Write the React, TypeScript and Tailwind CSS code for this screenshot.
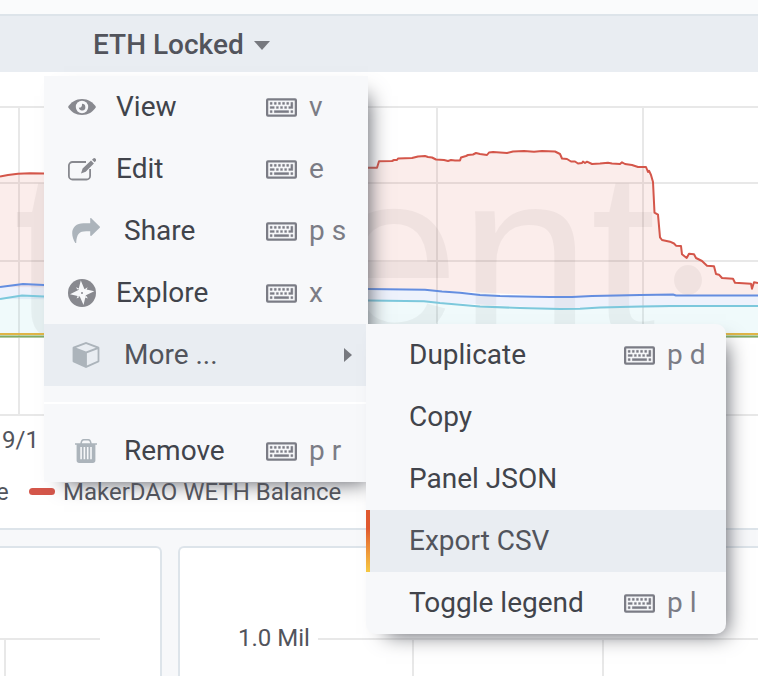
import React from "react";

const Keyboard = () => (
  <svg viewBox="0 0 15 9" className="h-[19px] w-[31px] shrink-0" aria-hidden="true">
    <rect x="0.55" y="0.55" width="13.9" height="7.9" rx="0.4" fill="none" stroke="#7b7c85" strokeWidth="1.1" />
    <path
      fill="#7b7c85"
      stroke="#7b7c85"
      strokeWidth="0.15"
      d="M2 2h1v1h-1zM4 2h1v1h-1zM6 2h1v1h-1zM8 2h1v1h-1zM10 2h1v1h-1zM12 2h1v3h-2v-1h1zM2 4h2v1h-2zM5 4h1v1h-1zM7 4h1v1h-1zM9 4h1v1h-1zM2 6h1v1h-1zM4 6h7v1h-7zM12 6h1v1h-1z"
    />
  </svg>
);

const EyeIcon = () => (
  <svg viewBox="0 0 28 28" className="size-7" aria-hidden="true">
    <path fill="#88898f" d="M0 14C3 9 8 6 14 6s11 3 14 8c-3 5-8 8-14 8S3 19 0 14z" />
    <circle cx="14" cy="14" r="6.2" fill="#f7f8fa" />
    <path fill="#88898f" d="M14 10.8a3.3 3.3 0 1 1-3.2 3.8c1.6.5 3.6-.8 3.2-3.8z" />
  </svg>
);

const EditIcon = () => (
  <svg viewBox="0 0 28 28" className="size-7" aria-hidden="true">
    <path
      fill="none"
      stroke="#88898f"
      strokeWidth="1.8"
      d="M18 7H4.5A3.6 3.6 0 0 0 .9 10.6v10.3a3.6 3.6 0 0 0 3.6 3.6h14a3.6 3.6 0 0 0 3.6-3.6V14"
    />
    <path fill="#88898f" d="M13 18.5l1.6-5L23 5.6l2.9 2.9-8.2 8.3zM24 4.7l1-1a1.7 1.7 0 0 1 2.6 2.6l-1 1z" />
  </svg>
);

const ShareIcon = () => (
  <svg viewBox="0 0 28 28" className="size-7" aria-hidden="true">
    <path
      fill="#acb4bb"
      d="M18.2 1.5c.3-.5.9-.5 1.3-.1l8.2 8.1c.4.4.4.9 0 1.3l-8.2 8c-.5.5-1.3.2-1.3-.5v-4.1h-4.1C7.5 14.2 4.5 17 4.2 26H3.3C1.5 23 .2 19.5.2 16.2c0-6 4.3-10 11.2-10h6.8z"
    />
  </svg>
);

const CompassIcon = () => (
  <svg viewBox="0 0 28 28" className="size-7" aria-hidden="true">
    <circle cx="14" cy="14" r="14" fill="#88898f" />
    <path
      fill="#f7f8fa"
      d="M12.800 1.500l3.600 8.500 9.900 2.300-8.400 4-2.400 9.700-3.700-8.500L2 15.200l8.400-4.200zM8 8.300l3 1.200-1.700 1zM19.600 8.300l-1.200 3-1.200-1.600zM8.600 19.600l1.200-3 1.300 1.700zM19.800 19.500l-3-1.200 1.700-1.200z"
    />
    <circle cx="14" cy="14" r="1" fill="#88898f" />
  </svg>
);

const CubeIcon = () => (
  <svg viewBox="0 0 28 28" className="size-7" aria-hidden="true">
    <path
      fill="#acb4bb"
      fillRule="evenodd"
      d="M14 1l12.800 4.800c.4.2.6.5.6.9v13.600c0 .4-.2.700-.6.900L14 27 1.200 21.200c-.4-.2-.6-.5-.6-.9V6.700c0-.4.2-.7.6-.9zM14 2.900L4.100 6.700 14 10.500l9.900-3.800zM14.900 12.200v12.400l10.700-4.800V8.200z"
    />
  </svg>
);

const TrashIcon = () => (
  <svg viewBox="0 0 28 28" className="size-7" aria-hidden="true">
    <path
      fill="#acb4bb"
      fillRule="evenodd"
      d="M3 6.200h5.300c.5-2.700 1.500-4.200 3.300-4.200h4.800c1.800 0 2.800 1.500 3.300 4.200H25v1.600h-1.600v15.700c0 1.500-1 2.500-2.500 2.500H7.100c-1.500 0-2.500-1-2.500-2.500V7.800H3zM9.900 6.200h8.200c-.3-1.700-.9-2.600-2-2.600h-4.200c-1.100 0-1.700.9-2 2.600zM8.300 10v12.200h1.600V10zM11.600 10v12.200h1.600V10zM14.900 10v12.200h1.600V10zM18.200 10v12.200h1.600V10z"
    />
  </svg>
);

type MenuItem = {
  label: string;
  icon: React.ReactNode;
  wide?: boolean;
  keys?: string;
  active?: boolean;
};

const mainItems: MenuItem[] = [
  { label: "View", icon: <EyeIcon />, keys: "v" },
  { label: "Edit", icon: <EditIcon />, keys: "e" },
  { label: "Share", icon: <ShareIcon />, wide: true, keys: "p s" },
  { label: "Explore", icon: <CompassIcon />, keys: "x" },
  { label: "More ...", icon: <CubeIcon />, wide: true, active: true },
];

const subItems: { label: string; keys?: string; active?: boolean }[] = [
  { label: "Duplicate", keys: "p d" },
  { label: "Copy" },
  { label: "Panel JSON" },
  { label: "Export CSV", active: true },
  { label: "Toggle legend", keys: "p l" },
];

const Shortcut = ({ keys }: { keys: string }) => (
  <span className="ml-auto flex w-[102px] items-center gap-3 text-[#7b7c85]">
    <Keyboard />
    <kbd className="font-[Roboto,sans-serif] text-[28px]">{keys}</kbd>
  </span>
);

const Row = ({ item }: { item: MenuItem }) => (
  <li>
    <button
      type="button"
      className={`flex h-[62px] w-full items-center gap-5 pl-6 text-left ${
        item.active ? "bg-[#e9edf2] text-[#52545c]" : "text-[#41444b]"
      }`}
    >
      <span className={`flex shrink-0 justify-center ${item.wide ? "w-9" : "w-7"}`}>{item.icon}</span>
      <span className="whitespace-nowrap">{item.label}</span>
      {item.keys && <Shortcut keys={item.keys} />}
      {item.active && (
        <svg viewBox="0 0 8 14" className="mr-4 ml-auto h-[14px] w-2" aria-hidden="true">
          <path d="M0 0l8 7-8 7z" fill="#77797f" />
        </svg>
      )}
    </button>
  </li>
);

const redLeft = "0,176.500 8,175 18,173.700 30,173.200 44,173.500 100,171 200,168 368,167.700";
const redRight =
  "377,167.700 379,161.300 392,161 394,160 397,160 398,158.500 412,158 418,156.500 425,156 428,157 432,157.500 436,159.500 444,160 448,161 451,160 455,160.500 460,160.500 461,157.500 466,156 468,155 473,154.500 476,153 480,154 487,155 489,152.500 493,152 507,153 513,151.500 524,151 534,151.700 542,151 555,151.500 560,154 562,158.500 567,159 571,161.500 575,161.500 578,163.500 582,163 583,161.500 585,163 587,161.700 592,164 600,163.500 608,162.700 612,163.500 620,164 622,162.300 625,164 632,165 638,167 646,167 648,172 649,170.700 651,175 653,182 654.500,212.700 658,214.700 660,237.300 662,240 670,241.700 674,243.500 676,245.700 681,246 682,254.300 686.700,258 689,253.700 694,254.300 696,258 702,261 707,265.700 714,266.300 716,274 719,274.700 722,278 733,278.700 735,282.700 751,283.700 752,288.700 754,282.300 758,283";
const red = `${redLeft} ${redRight}`;
const blue =
  "0,287 23,284 44,285 200,287 368,289 425,289.700 442,291.500 460,292.800 480,295 500,296 550,297 572,297 592,296 640,295 673,294.500 676,295.500 758,295.500";
const cyan =
  "0,299 22,295.500 44,296.500 200,299 368,300.500 424,301.200 440,303 480,306.500 520,308 560,309 580,308.700 600,307.500 640,306.500 670,306 758,306";

const Chart = () => (
  <svg
    viewBox="0 72 758 344"
    preserveAspectRatio="none"
    className="block h-[344px] w-full"
    role="img"
    aria-label="ETH Locked chart"
  >
    <g stroke="#e8e8e8" strokeWidth="2">
      <path d="M0 107H758M0 183H758M0 261H758M0 337H758M0 415H758M19 107V415M231 107V415M437 107V415M643 107V415" />
    </g>
    <polygon points={`${red} 758,295.500 676,295.500 572,297 425,289.700 0,287`} fill="#d44a3a" fillOpacity="0.1" />
    <polygon points={`${blue} 758,306 560,309 424,301.200 0,299`} fill="#5b84e0" fillOpacity="0.1" />
    <polygon points={`${cyan} 758,336 0,336`} fill="#6dcfdc" fillOpacity="0.1" />
    <g fill="#000" fillOpacity="0.045">
      <text x="656" y="336" textAnchor="end" fontSize="236" className="font-['Liberation_Sans',Arial,sans-serif]">
        Santiment
      </text>
      <ellipse cx="688" cy="280" rx="14" ry="15" />
    </g>
    <g fill="none" strokeWidth="2" strokeLinejoin="round">
      <polyline points={red} stroke="#d4564a" />
      <polyline points={blue} stroke="#648ee0" />
      <polyline points={cyan} stroke="#7cc8dc" />
      <path d="M0 334H758" stroke="#e0b547" />
      <path d="M0 336.500H758" stroke="#82ac62" />
    </g>
  </svg>
);

export default function App() {
  return (
    <div className="relative flex min-h-screen flex-col overflow-hidden bg-[#f7f8fa] font-[Roboto,sans-serif] text-[28px] leading-none">
      <div className="h-[14px] bg-[#fafbfc]" />
      <section className="border-y-2 border-[#dde4ea] bg-white">
        <header className="flex h-14 items-center bg-[#e9edf2] pt-0.5 pl-[93px]">
          <button type="button" className="flex items-center gap-[10px] font-medium text-[#52545c]">
            ETH Locked
            <svg viewBox="0 0 16 9" className="h-[9px] w-4" aria-hidden="true">
              <path d="M0 0h16L8 9z" fill="#77797f" />
            </svg>
          </button>
        </header>
        <Chart />
        <div className="flex h-12 items-center pl-0.5 text-2xl leading-none text-[#52545c]">9/1</div>
        <div className="flex h-16 items-start pt-4 text-2xl leading-none whitespace-nowrap text-[#52545c]">
          <span className="w-[29px] -indent-1">e</span>
          <span className="mt-2 h-[7px] w-[26px] rounded-sm bg-[#d4564a]" />
          <span className="pl-2">MakerDAO WETH Balance</span>
        </div>
      </section>

      <div className="flex flex-1 gap-4 pt-4">
        <section className="w-[162px] shrink-0 rounded-tr-md border-t-2 border-r-2 border-[#dde4ea] bg-white pt-[90px]">
          <div className="mr-[60px] border-t-2 border-[#e8e8e8]">
            <div className="ml-1 h-9 border-l-2 border-[#e8e8e8]" />
          </div>
        </section>
        <section className="flex flex-1 rounded-tl-md border-t-2 border-l-2 border-[#dde4ea] bg-white pl-[58px]">
          <span className="w-20 pt-[78px] text-2xl leading-none text-[#52545c]">1.0 Mil</span>
          <div className="mt-[90px] flex flex-1 border-t-2 border-[#e8e8e8]">
            <div className="w-24 border-r-2 border-[#e8e8e8]" />
            <div className="w-[190px] border-r-2 border-[#e8e8e8]" />
          </div>
        </section>
      </div>

      <nav
        aria-label="Panel menu"
        className="absolute top-[76px] left-11 w-[324px] bg-[#f7f8fa] shadow-[10px_10px_20px_-10px_#52545c]"
      >
        <ul>
          {mainItems.map((item) => (
            <Row key={item.label} item={item} />
          ))}
          <li role="separator" className="my-4 h-0.5 bg-white" />
          <Row item={{ label: "Remove", icon: <TrashIcon />, wide: true, keys: "p r" }} />
        </ul>
        <ul className="absolute top-[248px] left-[322px] w-[360px] overflow-hidden rounded-r-[10px] rounded-bl-[10px] bg-[#f7f8fa] shadow-[10px_10px_20px_-10px_#52545c]">
          {subItems.map((item) => (
            <li key={item.label} className="flex">
              <span className={`w-1 ${item.active ? "bg-linear-to-b from-[#e0592f] from-30% to-[#f5c842]" : ""}`} />
              <button
                type="button"
                className={`flex h-[62px] flex-1 items-center pl-[39px] text-left ${
                  item.active ? "bg-[#e9edf2] text-[#52545c]" : "text-[#41444b]"
                }`}
              >
                <span className="whitespace-nowrap">{item.label}</span>
                {item.keys && <Shortcut keys={item.keys} />}
              </button>
            </li>
          ))}
        </ul>
      </nav>
    </div>
  );
}
